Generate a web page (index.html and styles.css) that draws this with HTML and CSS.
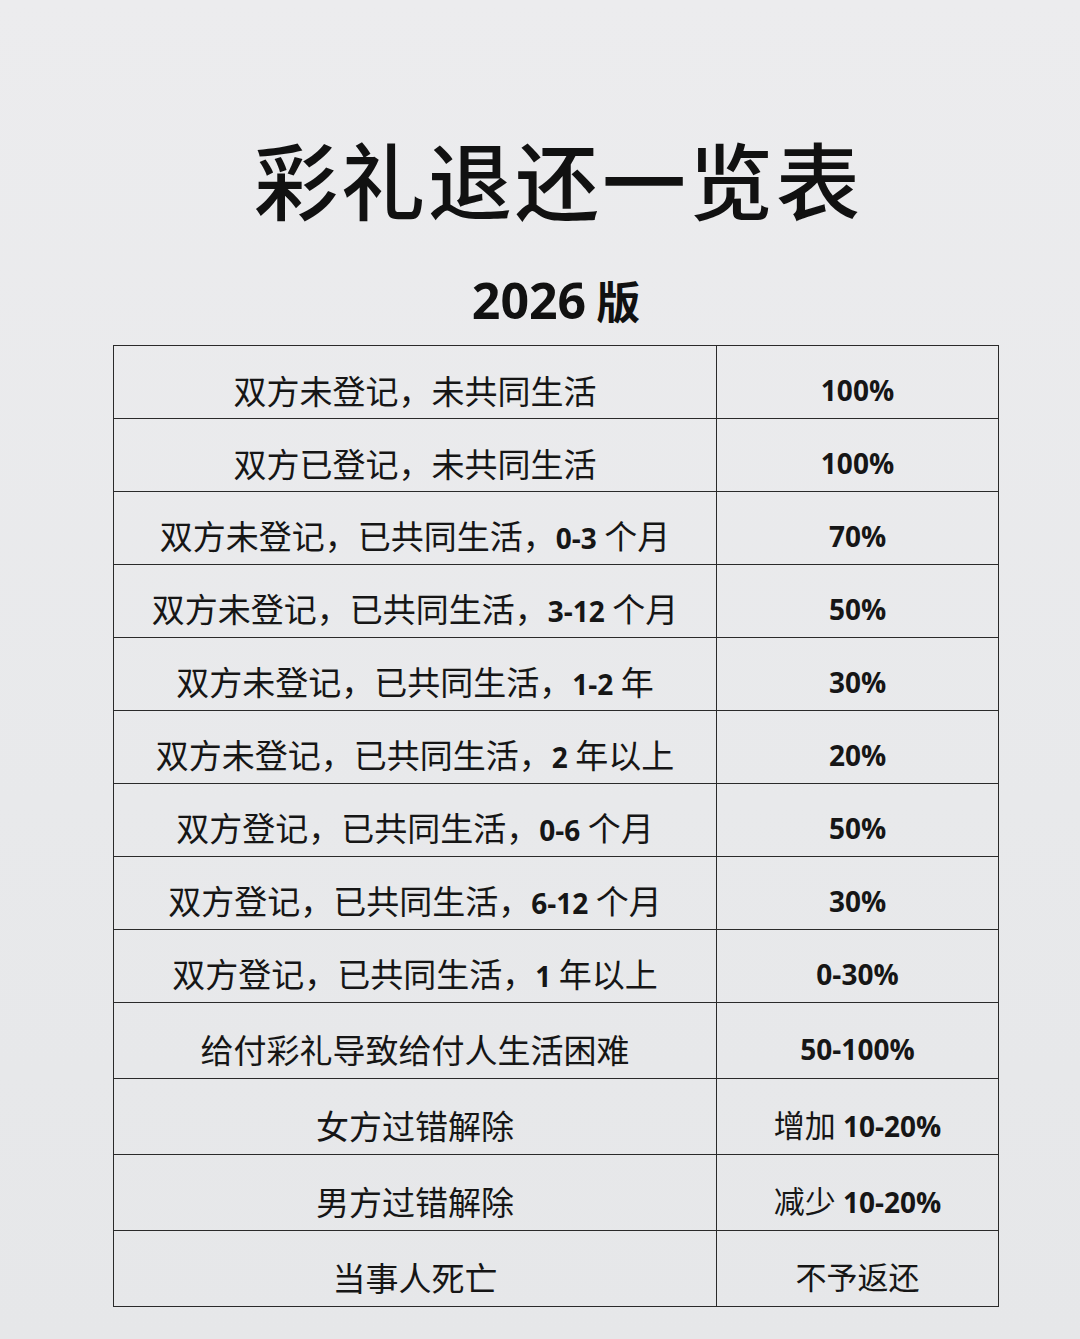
FILE: index.html
```html
<!DOCTYPE html>
<html lang="zh-CN">
<head>
<meta charset="utf-8">
<title>彩礼退还一览表</title>
<link rel="stylesheet" href="styles.css">
</head>
<body>
<div class="page">
  <h1 class="title">彩礼退还一览表</h1>
  <div class="subtitle"><span class="num">2026</span> 版</div>
  <table class="sheet">
    <colgroup><col class="c-left"><col class="c-right"></colgroup>
    <tr><td>双方未登记，未共同生活</td><td class="val">100%</td></tr>
    <tr><td>双方已登记，未共同生活</td><td class="val">100%</td></tr>
    <tr><td>双方未登记，已共同生活，<b>0-3</b> 个月</td><td class="val">70%</td></tr>
    <tr><td>双方未登记，已共同生活，<b>3-12</b> 个月</td><td class="val">50%</td></tr>
    <tr><td>双方未登记，已共同生活，<b>1-2</b> 年</td><td class="val">30%</td></tr>
    <tr><td>双方未登记，已共同生活，<b>2</b> 年以上</td><td class="val">20%</td></tr>
    <tr><td>双方登记，已共同生活，<b>0-6</b> 个月</td><td class="val">50%</td></tr>
    <tr><td>双方登记，已共同生活，<b>6-12</b> 个月</td><td class="val">30%</td></tr>
    <tr><td>双方登记，已共同生活，<b>1</b> 年以上</td><td class="val">0-30%</td></tr>
    <tr class="tall"><td>给付彩礼导致给付人生活困难</td><td class="val">50-100%</td></tr>
    <tr class="tall"><td>女方过错解除</td><td class="val"><span class="cn">增加</span> 10-20%</td></tr>
    <tr class="tall"><td>男方过错解除</td><td class="val"><span class="cn">减少</span> 10-20%</td></tr>
    <tr class="tall"><td>当事人死亡</td><td class="val"><span class="cn">不予返还</span></td></tr>
  </table>
</div>
</body>
</html>
```

FILE: styles.css
```css
html, body {
  margin: 0;
  padding: 0;
}
body {
  background: #e9e9eb;
  color: #141414;
  font-family: "Noto Sans CJK SC", "Noto Sans", sans-serif;
}
.page {
  width: 1080px;
  height: 1339px;
  padding-top: 134px;
  box-sizing: border-box;
  background: linear-gradient(180deg, #ececee 0%, #e8e9eb 60%, #e6e7e9 100%);
}
.title {
  margin: 0;
  padding-left: 37px;
  font-size: 84px;
  line-height: 88px;
  font-weight: 500;
  letter-spacing: 3px;
  text-align: center;
  color: #111;
}
.subtitle {
  margin-top: 53px;
  padding-left: 32px;
  height: 50px;
  font-size: 44px;
  line-height: 50px;
  font-weight: 700;
  text-align: center;
  color: #111;
}
.subtitle .num {
  font-family: "Open Sans", "Liberation Sans", sans-serif;
  font-size: 50px;
  font-weight: 700;
}
.sheet {
  margin: 20px 0 0 113px;
  width: 885px;
  border-collapse: collapse;
  table-layout: fixed;
}
.c-left { width: 603px; }
.c-right { width: 282px; }
.sheet td {
  border: 1.5px solid #2a2a2a;
  height: 73px;
  padding: 16px 0 0;
  box-sizing: border-box;
  text-align: center;
  vertical-align: middle;
  font-size: 33px;
  line-height: 40px;
  font-weight: 400;
  white-space: nowrap;
  color: #161616;
}
.sheet tr.tall td {
  height: 76px;
}
.sheet td b {
  font-family: "Open Sans", "Liberation Sans", sans-serif;
  font-weight: 700;
  font-size: 28px;
}
.sheet td.val {
  font-family: "Open Sans", "Liberation Sans", sans-serif;
  font-weight: 700;
  font-size: 28px;
}
.sheet td.val .cn {
  font-family: "Noto Sans CJK SC", sans-serif;
  font-weight: 400;
  font-size: 31px;
}
```
